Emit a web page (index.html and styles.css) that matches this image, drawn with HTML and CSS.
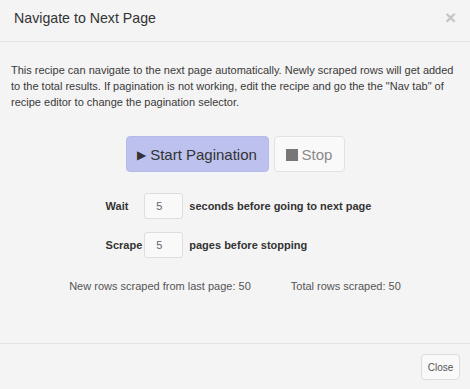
FILE: index.html
```html
<!DOCTYPE html>
<html lang="en">
<head>
    <meta charset="UTF-8">
    <title>Navigate to Next Page</title>
    <link rel="stylesheet" href="styles.css">
</head>
<body>
    <div class="modal">
        <div class="modal-header">
            <h4 class="modal-title">Navigate to Next Page</h4>
            <span class="close-x">&times;</span>
        </div>

        <div class="modal-body">
            <p class="intro">This recipe can navigate to the next page automatically. Newly scraped rows will get added to the total results. If pagination is not working, edit the recipe and go the the "Nav tab" of recipe editor to change the pagination selector.</p>

            <div class="actions">
                <button class="btn btn-start"><span class="play">&#9654;</span>Start Pagination</button>
                <button class="btn btn-stop"><span class="square"></span>Stop</button>
            </div>

            <div class="settings">
                <label class="set-label">Wait</label>
                <input class="set-input" type="text" value="5">
                <span class="set-text">seconds before going to next page</span>

                <label class="set-label">Scrape</label>
                <input class="set-input" type="text" value="5">
                <span class="set-text">pages before stopping</span>
            </div>

            <div class="stats">
                <span>New rows scraped from last page: 50</span>
                <span>Total rows scraped: 50</span>
            </div>
        </div>

        <div class="modal-footer">
            <button class="btn btn-close">Close</button>
        </div>
    </div>
</body>
</html>
```

FILE: styles.css
```css
body {
    margin: 0;
    font-family: 'Liberation Sans', Arial, sans-serif;
    background: #f4f4f4;
    color: #333;
}

.modal {
    height: 389px;
    display: flex;
    flex-direction: column;
    background: #f4f4f4;
}

.modal-header {
    height: 42px;
    box-sizing: border-box;
    padding: 0 12px 0 14px;
    display: flex;
    align-items: center;
    justify-content: space-between;
    border-bottom: 1px solid #e4e4e4;
}

.modal-title {
    margin: 0;
    font-size: 14.2px;
    font-weight: normal;
    color: #333;
    padding-bottom: 5px;
}

.close-x {
    font-size: 19px;
    font-weight: bold;
    color: #c4c4c4;
    padding-bottom: 6px;
    margin-right: 2px;
}

.modal-body {
    flex: 1;
    padding: 20px 11px 0 11px;
}

.intro {
    margin: 0;
    font-size: 11px;
    line-height: 16px;
    color: #3a3a3a;
}

.actions {
    display: flex;
    justify-content: center;
    gap: 5px;
    margin-top: 26px;
}

.btn {
    font-family: inherit;
    border-radius: 4px;
    cursor: pointer;
}

.btn-start {
    width: 143px;
    height: 36px;
    background: #bdc1ee;
    border: 1px solid #b6baea;
    color: #333;
    font-size: 15px;
    padding: 0;
}

.play {
    font-size: 12px;
    margin-right: 4px;
    position: relative;
    top: -1px;
}

.btn-stop {
    width: 71px;
    height: 36px;
    background: #f9f9f9;
    border: 1px solid #e2e2e2;
    color: #8a8a8a;
    font-size: 15px;
    padding: 0;
}

.square {
    display: inline-block;
    width: 12px;
    height: 12px;
    background: #777;
    margin-right: 4px;
    vertical-align: -1px;
}

.settings {
    display: grid;
    grid-template-columns: auto auto auto;
    justify-content: center;
    align-items: center;
    row-gap: 13px;
    margin-top: 21px;
    padding-left: 7px;
}

.set-label {
    font-size: 11px;
    font-weight: bold;
    color: #333;
    padding-right: 2px;
}

.set-input {
    width: 39px;
    height: 26px;
    box-sizing: border-box;
    border: 1px solid #dedede;
    border-radius: 3px;
    background: #f9f9f9;
    color: #666;
    font-family: inherit;
    font-size: 11px;
    padding: 0 0 0 11px;
}

.set-text {
    font-size: 11px;
    font-weight: bold;
    color: #333;
    padding-left: 6px;
}

.stats {
    display: flex;
    justify-content: center;
    gap: 40px;
    margin-top: 20px;
    font-size: 11px;
    color: #555;
    line-height: 16px;
}

.modal-footer {
    height: 46px;
    box-sizing: border-box;
    border-top: 1px solid #e4e4e4;
    display: flex;
    justify-content: flex-end;
    align-items: flex-start;
    padding: 10px 10px 0 0;
}

.btn-close {
    width: 39px;
    height: 26px;
    background: #f9f9f9;
    border: 1px solid #dcdcdc;
    color: #555;
    font-size: 10px;
    padding: 0;
}
```
